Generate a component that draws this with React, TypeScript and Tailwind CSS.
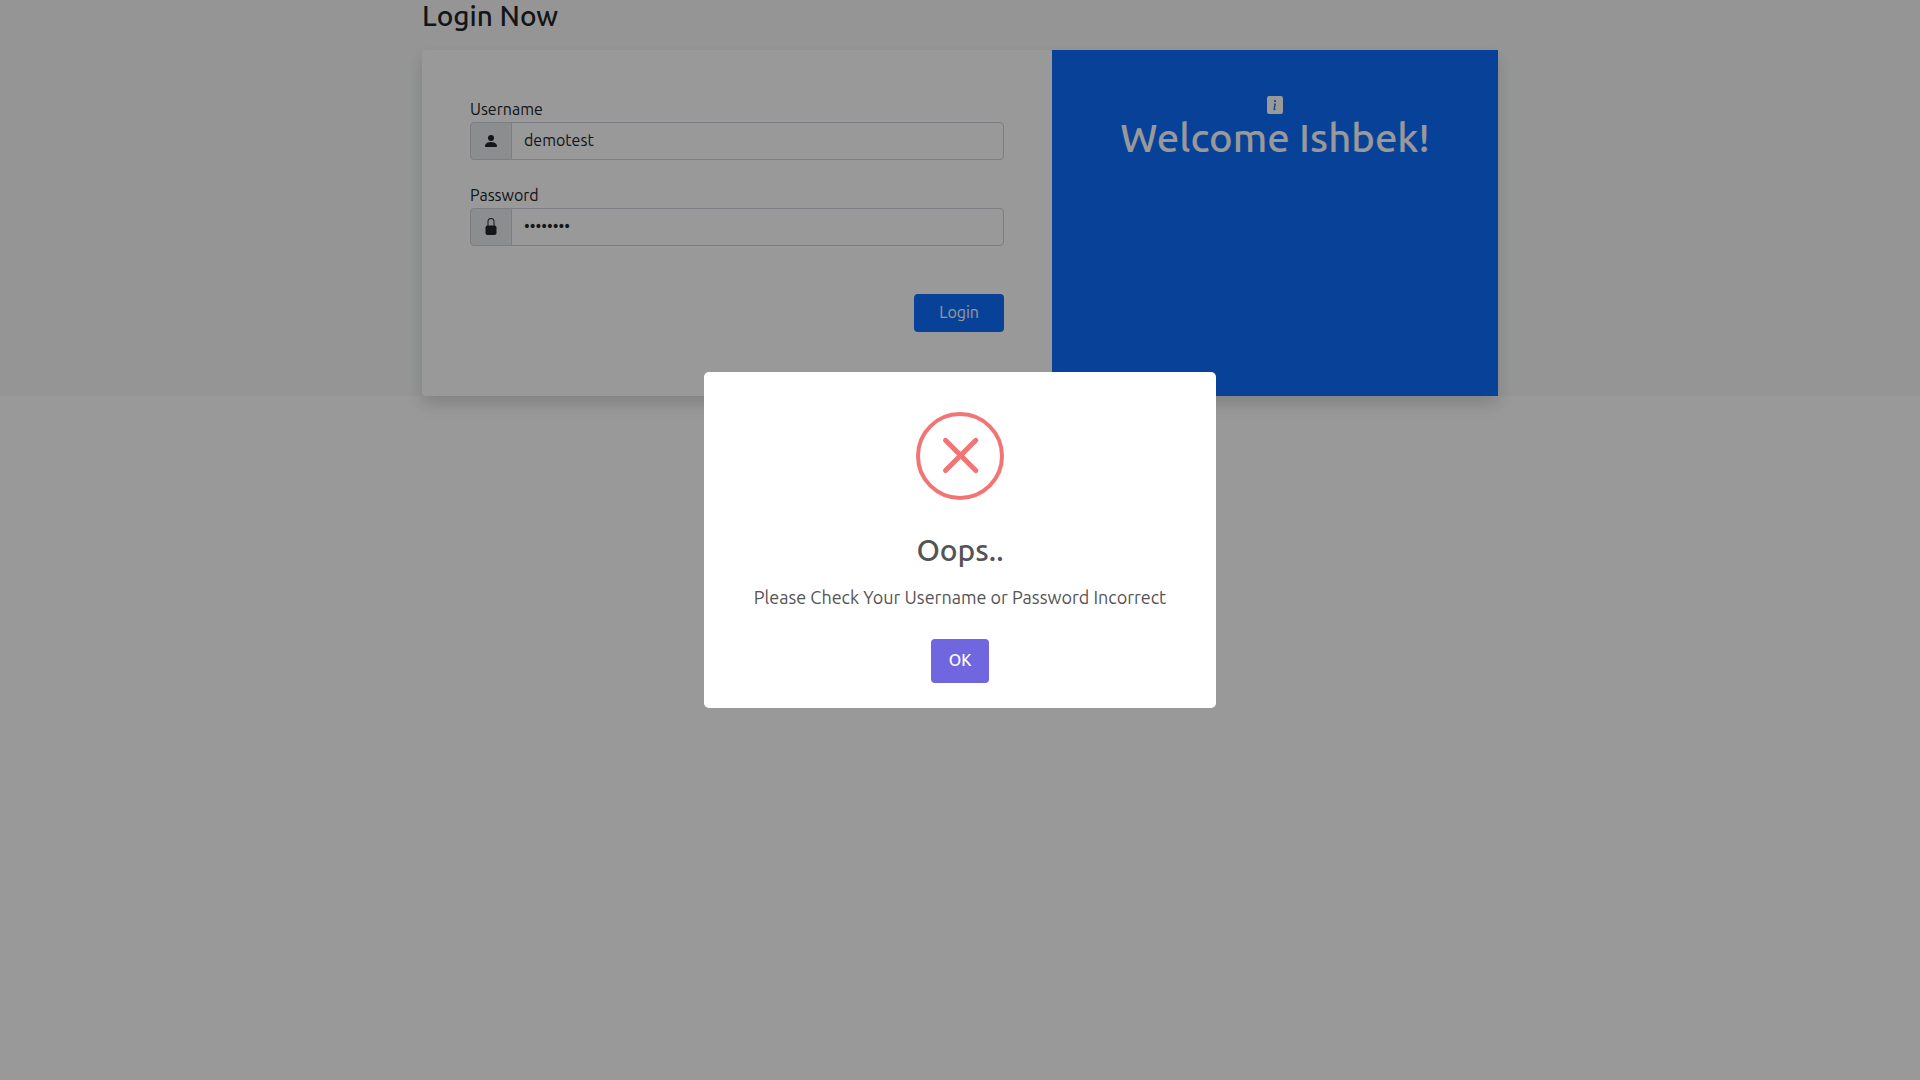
import type { ReactNode } from "react";
import { BsPersonFill, BsInfoSquareFill } from "react-icons/bs";

function LockIcon() {
  return (
    <svg viewBox="0 0 16 16" className="h-4 w-4 overflow-visible" fill="currentColor" aria-hidden="true">
      <rect x="2.5" y="6.5" width="11" height="9.5" rx="2" />
      <path d="M4.500 7V2.500a3.500 3.500 0 0 1 7 0V7h-1V2.500a2.500 2.500 0 0 0-5 0V7z" />
    </svg>
  );
}

function Field(props: { id: string; label: string; type: string; value: string; icon: ReactNode }) {
  return (
    <div className="mb-6">
      <label htmlFor={props.id} className="block pb-0.5 leading-[22px]">
        {props.label}
      </label>
      <div className="flex">
        <span className="flex items-center rounded-l border border-[#ced4da] bg-[#e9ecef] px-3">{props.icon}</span>
        <input
          id={props.id}
          type={props.type}
          defaultValue={props.value}
          className="-ml-px h-[38px] min-w-0 flex-1 rounded-r border border-[#ced4da] bg-white px-3 pb-0.5 outline-none"
        />
      </div>
    </div>
  );
}

export default function App() {
  return (
    <div className="min-h-screen bg-white font-['Ubuntu','Noto_Sans',sans-serif] text-base text-[#212529]">
      <main className="bg-[#f8f9fa]">
        <div className="mx-auto max-w-[1076px]">
          <h3 className="pb-[18px] text-[28px] leading-8 font-medium">Login Now</h3>
          <div className="grid grid-cols-[630fr_446fr] rounded shadow-[0_8px_16px_rgba(0,0,0,0.15)]">
            <form className="rounded-l bg-white px-12 pt-12 pb-16" onSubmit={(e) => e.preventDefault()}>
              <Field id="username" label="Username" type="text" value="demotest" icon={<BsPersonFill />} />
              <Field id="password" label="Password" type="password" value="password" icon={<LockIcon />} />
              <div className="mt-12 flex justify-end">
                <button type="submit" className="h-[38px] rounded bg-[#0d6efd] px-[25px] pb-0.5 text-white">
                  Login
                </button>
              </div>
            </form>
            <section className="flex flex-col items-center bg-[#0d6efd] pt-[46px] text-center text-white">
              <BsInfoSquareFill className="h-[18px] w-4" preserveAspectRatio="none" />
              <h1 className="text-[40px] leading-[48px] font-medium">Welcome Ishbek!</h1>
            </section>
          </div>
        </div>
      </main>

      <div className="fixed inset-0 flex items-center justify-center bg-black/40">
        <div
          role="dialog"
          aria-modal="true"
          aria-labelledby="alert-title"
          className="flex w-lg flex-col items-center rounded-[5px] bg-white pt-10 pb-[25px] text-[#545454]"
        >
          <svg viewBox="0 0 88 88" className="h-22 w-22" fill="none" stroke="#f27474" aria-hidden="true">
            <circle cx="44" cy="44" r="42" strokeWidth="4" />
            <path d="M29.500 28.300l30.300 30.300M59.800 28.300l-30.300 30.300" strokeWidth="5" strokeLinecap="round" />
          </svg>
          <h2 id="alert-title" className="mt-8 text-[30px] leading-9 font-[550]">
            Oops..
          </h2>
          <p className="mt-[13px] text-lg leading-8">Please Check Your Username or Password Incorrect</p>
          <button type="button" className="mt-[26px] h-11 rounded bg-[#7066e0] px-[18px] pb-0.5 font-medium text-white">
            OK
          </button>
        </div>
      </div>
    </div>
  );
}
